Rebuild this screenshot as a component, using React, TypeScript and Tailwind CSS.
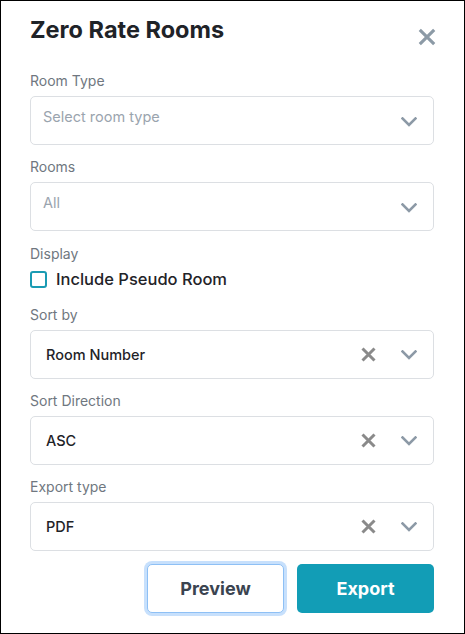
import React from "react";

const Chevron = () => (
  <svg width="16" height="10" viewBox="0 0 16 10" fill="none">
    <path d="M1.5 1.5 L8 8 L14.5 1.5" stroke="#8c99a6" strokeWidth="2.6" strokeLinecap="square" />
  </svg>
);

const XIcon = ({ size = 15, color = "#8a8a8a", sw = 3 }: { size?: number; color?: string; sw?: number }) => (
  <svg width={size} height={size} viewBox="0 0 15 15" fill="none">
    <path d="M1.5 1.5 L13.5 13.5 M13.5 1.5 L1.5 13.5" stroke={color} strokeWidth={sw} />
  </svg>
);

function Label({ children }: { children: React.ReactNode }) {
  return <div className="text-[14px] leading-[20px] text-[#6f7780]">{children}</div>;
}

function PlaceholderSelect({ text }: { text: string }) {
  return (
    <div className="mt-[5px] h-[49px] rounded-[5px] border border-[#dcdfe3] flex items-start justify-between pl-[12px] pr-[16px]">
      <span className="mt-[10px] text-[14.5px] leading-[20px] text-[#9aa4ae]">{text}</span>
      <span className="mt-[20px]"><Chevron /></span>
    </div>
  );
}

function ValueSelect({ text }: { text: string }) {
  return (
    <div className="mt-[5px] h-[49px] rounded-[5px] border border-[#dcdfe3] flex items-center pl-[15px] pr-[16px]">
      <span className="flex-1 text-[14.5px] font-medium text-[#1f2328] mt-[1px]">{text}</span>
      <span className="mr-[25px] flex"><XIcon /></span>
      <span className="flex"><Chevron /></span>
    </div>
  );
}

export default function App() {
  return (
    <div
      className="w-[465px] h-[634px] border border-black bg-white box-border pl-[29px] pr-[30px] relative"
      style={{ fontFamily: "Inter, 'Liberation Sans', sans-serif" }}
    >
      <div className="flex items-start justify-between pt-[13px]">
        <h1 className="text-[23.5px] leading-[32px] font-bold text-[#1f2328]">Zero Rate Rooms</h1>
        <span className="mt-[14px] mr-[-2px] flex"><XIcon size={18} color="#8c9aa6" sw={2.6} /></span>
      </div>

      <div className="mt-[25px]">
        <Label>Room Type</Label>
        <PlaceholderSelect text="Select room type" />
      </div>

      <div className="mt-[12px]">
        <Label>Rooms</Label>
        <PlaceholderSelect text="All" />
      </div>

      <div className="mt-[13px]">
        <Label>Display</Label>
        <label className="mt-[4px] flex items-center gap-[9px]">
          <span className="w-[17px] h-[17px] rounded-[3px] border-[2.5px] border-[#1a9bb3] bg-white" />
          <span className="text-[16.5px] font-medium text-[#1f2328] leading-[22px]">Include Pseudo Room</span>
        </label>
      </div>

      <div className="mt-[15px]">
        <Label>Sort by</Label>
        <ValueSelect text="Room Number" />
      </div>

      <div className="mt-[12px]">
        <Label>Sort Direction</Label>
        <ValueSelect text="ASC" />
      </div>

      <div className="mt-[12px]">
        <Label>Export type</Label>
        <ValueSelect text="PDF" />
      </div>

      <div className="mt-[13px] flex justify-end gap-[13px]">
        <button className="w-[137px] h-[49px] rounded-[5px] border border-[#8ec0f5] ring-[3px] ring-[#c7e0fc] bg-white text-[18px] font-bold text-[#3b4450]">
          Preview
        </button>
        <button className="w-[137px] h-[49px] rounded-[5px] bg-[#129db6] text-[18px] font-bold text-white">
          Export
        </button>
      </div>
    </div>
  );
}
